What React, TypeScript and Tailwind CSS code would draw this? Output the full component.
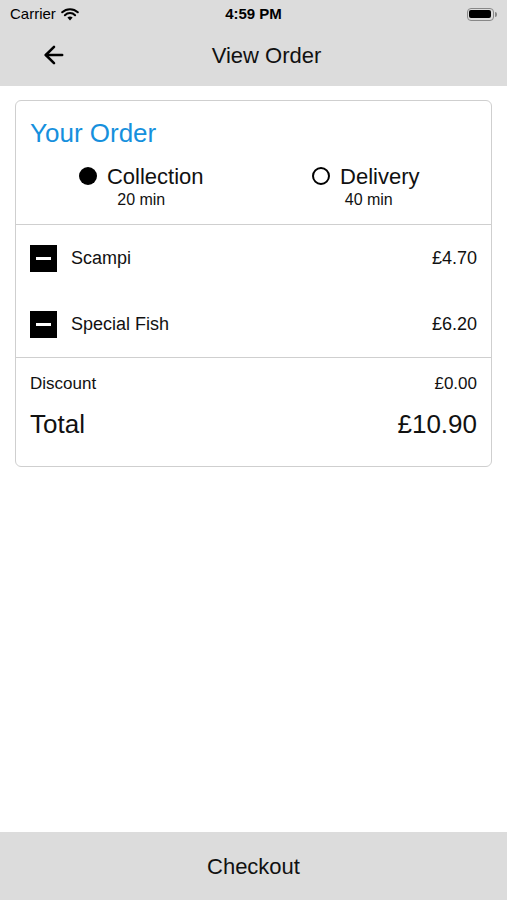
import { ArrowLeft } from "lucide-react";

const items = [
  { id: 1, name: "Scampi", price: "£4.70" },
  { id: 2, name: "Special Fish", price: "£6.20" }
];

const StatusBar = () => (
  <div className="h-[28px] flex items-center justify-between px-[10px] text-[15px] text-black">
    <div className="flex items-center gap-[5px] w-[120px]">
      <span>Carrier</span>
      <svg width="18" height="13" viewBox="0 0 18 13">
        <path d="M9 12.5 L6.4 9.6 A3.8 3.8 0 0 1 11.6 9.6 Z" fill="black" />
        <path d="M3.9 7.2 A7.3 7.3 0 0 1 14.1 7.2" stroke="black" strokeWidth="2" fill="none" strokeLinecap="round" />
        <path d="M1.2 4.3 A11.2 11.2 0 0 1 16.8 4.3" stroke="black" strokeWidth="2" fill="none" strokeLinecap="round" />
      </svg>
    </div>
    <span className="font-bold">4:59 PM</span>
    <div className="w-[120px] flex justify-end">
      <div className="flex items-center">
        <div className="w-[27px] h-[13px] rounded-[4px] border border-[#888] p-[1.5px]">
          <div className="w-full h-full rounded-[2px] bg-black" />
        </div>
        <div className="w-[2px] h-[5px] rounded-r bg-[#888] ml-[1px]" />
      </div>
    </div>
  </div>
);

const App = () => {
  return (
    <div className="h-[900px] flex flex-col bg-white font-['Liberation_Sans',Arial,sans-serif] text-[#111]">
      {/* Header */}
      <div className="bg-[#dcdcdc]">
        <StatusBar />
        <div className="h-[58px] flex items-center relative pb-[4px]">
          <button className="absolute left-[40px] top-[13px]">
            <ArrowLeft size={28} strokeWidth={2.2} color="black" />
          </button>
          <h1 className="flex-1 text-center text-[22px] pl-[26px]">View Order</h1>
        </div>
      </div>

      {/* Order card */}
      <div className="flex-1 px-[15px] pt-[14px]">
        <div className="border border-[#cfcfcf] rounded-[6px]">
          <div className="h-[124px] border-b border-[#cfcfcf] px-[14px] pt-[15px]">
            <h2 className="text-[26px] leading-[34px] text-[#1690dd]">Your Order</h2>
            <div className="flex mt-[12px]">
              <div className="flex-1 flex flex-col items-center">
                <div className="flex items-center gap-[10px] h-[28px]">
                  <span className="w-[18px] h-[18px] rounded-full bg-black" />
                  <span className="text-[22px]">Collection</span>
                </div>
                <span className="text-[16px] leading-[20px]">20 min</span>
              </div>
              <div className="flex-1 flex flex-col items-center pl-[2px]">
                <div className="flex items-center gap-[10px] h-[28px]">
                  <span className="w-[18px] h-[18px] rounded-full border-2 border-black" />
                  <span className="text-[22px]">Delivery</span>
                </div>
                <span className="text-[16px] leading-[20px] pl-[6px]">40 min</span>
              </div>
            </div>
          </div>

          <div className="border-b border-[#cfcfcf]">
            {items.map(item => (
              <div key={item.id} className="h-[66px] flex items-center px-[14px]">
                <button className="w-[27px] h-[27px] bg-black flex items-center justify-center">
                  <span className="w-[15px] h-[3px] bg-white" />
                </button>
                <span className="flex-1 ml-[14px] text-[18px]">{item.name}</span>
                <span className="text-[18px]">{item.price}</span>
              </div>
            ))}
          </div>

          <div className="px-[14px] pt-[14px] pb-[25px]">
            <div className="flex justify-between text-[17px] leading-[24px]">
              <span>Discount</span>
              <span>£0.00</span>
            </div>
            <div className="flex justify-between text-[26px] leading-[34px] mt-[11px]">
              <span>Total</span>
              <span>£10.90</span>
            </div>
          </div>
        </div>
      </div>

      {/* Checkout */}
      <button className="h-[68px] bg-[#dcdcdc] text-[22px] text-[#111]">Checkout</button>
    </div>
  );
};

export default App;
